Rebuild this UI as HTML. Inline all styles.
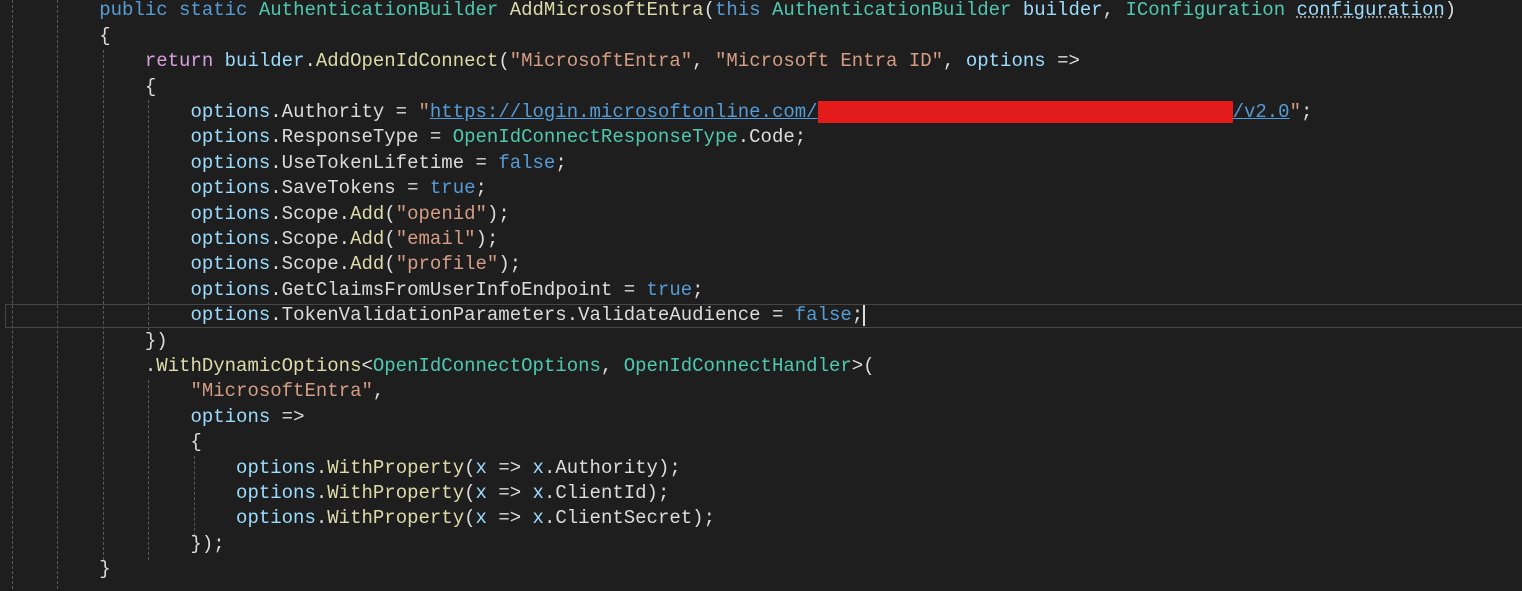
<!DOCTYPE html>
<html><head><meta charset="utf-8"><style>
body{margin:0;width:1522px;height:589px;background:#1e1e1e;overflow:hidden;position:relative;font-family:"Liberation Mono",monospace;font-size:19px;color:#dcdcdc}
#w{position:absolute;left:0;top:2px;width:1522px;height:589px}
.l{position:absolute;left:8px;height:25.4px;line-height:25.4px;white-space:pre}
.k{color:#569cd6}.t{color:#4ec9b0}.m{color:#dcdcaa}.v{color:#9cdcfe}.s{color:#d69d85}.r{color:#d8a0df}
.u{color:#569cd6;text-decoration:underline}
.g{position:absolute;width:0;border-left:1px dashed #5a5a5a}
.red{display:inline-block;width:415px;height:22px;background:#e41b1b;vertical-align:middle}
</style></head><body>
<div class="g" style="left:12px;top:0;height:589px"></div>
<div class="g" style="left:57px;top:0;height:589px"></div>
<div class="g" style="left:103px;top:50px;height:510px"></div>
<div class="g" style="left:148px;top:100px;height:230px"></div>
<div class="g" style="left:148px;top:380px;height:180px"></div>
<div class="g" style="left:194px;top:456px;height:80px"></div>
<div style="position:absolute;left:5px;top:304px;width:1517px;height:22px;border:1px solid #464646;border-right:none"></div>
<div style="position:absolute;left:863px;top:305px;width:2px;height:21px;background:#dcdcdc"></div>
<div id="w">
<div class="l" style="top:-3.7px">        <span class="k">public static</span> <span class="t">AuthenticationBuilder</span> <span class="m">AddMicrosoftEntra</span>(<span class="k">this</span> <span class="t">AuthenticationBuilder</span> <span class="v">builder</span>, <span class="t">IConfiguration</span> <span class="v" style="text-decoration:underline dotted #999">configuration</span>)</div>
<div class="l" style="top:21.7px">        {</div>
<div class="l" style="top:47.1px">            <span class="r">return</span> <span class="v">builder</span>.<span class="m">AddOpenIdConnect</span>(<span class="s">"MicrosoftEntra"</span>, <span class="s">"Microsoft Entra ID"</span>, <span class="v">options</span> =&gt;</div>
<div class="l" style="top:72.5px">            {</div>
<div class="l" style="top:97.9px">                <span class="v">options</span>.Authority = <span class="s">"</span><span class="u">https://login.microsoftonline.com/</span><span class="red"></span><span class="u">/v2.0</span><span class="s">"</span>;</div>
<div class="l" style="top:123.3px">                <span class="v">options</span>.ResponseType = <span class="t">OpenIdConnectResponseType</span>.Code;</div>
<div class="l" style="top:148.7px">                <span class="v">options</span>.UseTokenLifetime = <span class="k">false</span>;</div>
<div class="l" style="top:174.1px">                <span class="v">options</span>.SaveTokens = <span class="k">true</span>;</div>
<div class="l" style="top:199.5px">                <span class="v">options</span>.Scope.<span class="m">Add</span>(<span class="s">"openid"</span>);</div>
<div class="l" style="top:224.9px">                <span class="v">options</span>.Scope.<span class="m">Add</span>(<span class="s">"email"</span>);</div>
<div class="l" style="top:250.3px">                <span class="v">options</span>.Scope.<span class="m">Add</span>(<span class="s">"profile"</span>);</div>
<div class="l" style="top:275.7px">                <span class="v">options</span>.GetClaimsFromUserInfoEndpoint = <span class="k">true</span>;</div>
<div class="l" style="top:301.1px">                <span class="v">options</span>.TokenValidationParameters.ValidateAudience = <span class="k">false</span>;</div>
<div class="l" style="top:326.5px">            })</div>
<div class="l" style="top:351.9px">            .<span class="m">WithDynamicOptions</span>&lt;<span class="t">OpenIdConnectOptions</span>, <span class="t">OpenIdConnectHandler</span>&gt;(</div>
<div class="l" style="top:377.3px">                <span class="s">"MicrosoftEntra"</span>,</div>
<div class="l" style="top:402.7px">                <span class="v">options</span> =&gt;</div>
<div class="l" style="top:428.1px">                {</div>
<div class="l" style="top:453.5px">                    <span class="v">options</span>.<span class="m">WithProperty</span>(<span class="v">x</span> =&gt; <span class="v">x</span>.Authority);</div>
<div class="l" style="top:478.9px">                    <span class="v">options</span>.<span class="m">WithProperty</span>(<span class="v">x</span> =&gt; <span class="v">x</span>.ClientId);</div>
<div class="l" style="top:504.3px">                    <span class="v">options</span>.<span class="m">WithProperty</span>(<span class="v">x</span> =&gt; <span class="v">x</span>.ClientSecret);</div>
<div class="l" style="top:529.7px">                });</div>
<div class="l" style="top:555.1px">        }</div>
</div>
</body></html>
